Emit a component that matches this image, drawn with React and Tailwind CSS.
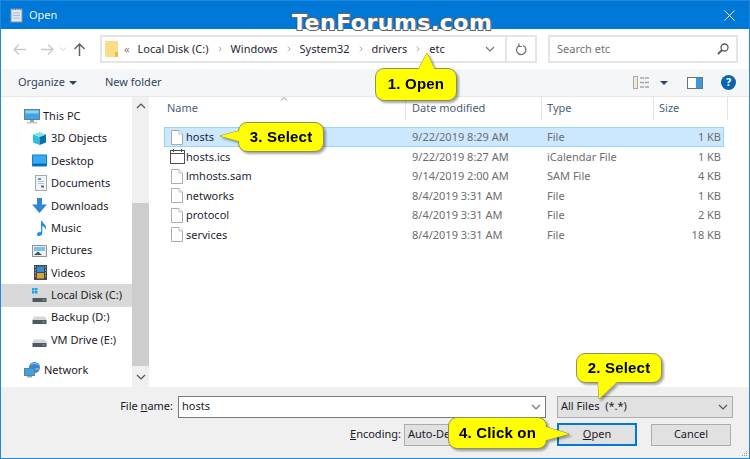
import React from "react";

const sans = "font-['Noto_Sans','Open_Sans',sans-serif]";

const PcIcon = () => (
  <svg width="16" height="15" viewBox="0 0 16 15">
    <rect x="0.500" y="0.500" width="15" height="10" fill="#3ba5e8" stroke="#6d7f8c" />
    <rect x="1.500" y="1.500" width="13" height="3" fill="#8fd0f5" />
    <rect x="6" y="11" width="4" height="2" fill="#98a2aa" />
    <rect x="3" y="13" width="10" height="1.500" fill="#c1c7cc" />
  </svg>
);

const CubeIcon = () => (
  <svg width="15" height="15" viewBox="0 0 15 15">
    <path d="M1 3.500 7.500 1 14 3.500 7.500 6z" fill="#7fe3ee" />
    <path d="M1 3.500 7.500 6v8L1 11.500z" fill="#2cc1d8" />
    <path d="M14 3.500 7.500 6v8l6.500-2.500z" fill="#0c6fa8" />
  </svg>
);

const DesktopIcon = () => (
  <svg width="15" height="13" viewBox="0 0 15 13">
    <rect x="0" y="0.500" width="15" height="12" rx="0.500" fill="#0a7fdc" />
    <rect x="1" y="1.500" width="13" height="8" fill="#3ba9f2" />
    <rect x="1" y="10" width="13" height="1.500" fill="#0b5ea8" />
  </svg>
);

const DocumentsIcon = () => (
  <svg width="12" height="16" viewBox="0 0 12 16">
    <rect x="0.500" y="0.500" width="11" height="15" fill="#f2f3f4" stroke="#a5a9ad" />
    <rect x="3" y="3" width="3" height="2" fill="#4a9ed8" />
    <path d="M3 6.500h6M3 8.500h6" stroke="#9fc6e2" />
    <rect x="6" y="10.500" width="3" height="2" fill="#5f6d78" />
  </svg>
);

const DownloadsIcon = () => (
  <svg width="15" height="15" viewBox="0 0 15 15">
    <path d="M5 0h5v6.500h5L7.500 15 0 6.500h5z" fill="#2f86d6" />
  </svg>
);

const MusicIcon = () => (
  <svg width="11" height="15" viewBox="0 0 11 15">
    <path d="M5 0h1.300c.4 2.600 3.700 3.400 3.700 6.500 0 1-.3 1.600-.7 2.100.1-2.200-1.600-3.200-3-3.700V12c0 1.700-1.500 3-3.300 3C1.800 15 1 14.200 1 13.200 1 11.600 3 10.700 5 11.200z" fill="#1e90e6" />
  </svg>
);

const PicturesIcon = () => (
  <svg width="15" height="12" viewBox="0 0 15 12">
    <rect x="0.500" y="0.500" width="14" height="11" fill="#e6e8ea" stroke="#8f979e" />
    <rect x="2" y="2" width="11" height="4" fill="#7cc0ec" />
    <path d="M2 6h11v4H2z" fill="#f5f5f5" />
    <path d="M2 10 6 6.500 10 10z" fill="#42525e" />
  </svg>
);

const VideosIcon = () => (
  <svg width="13" height="15" viewBox="0 0 13 15">
    <rect width="13" height="15" fill="#3f4a55" />
    <rect x="3" y="1.500" width="7" height="5.500" fill="#2f8fd6" />
    <rect x="3" y="8" width="7" height="5.500" fill="#d8a62e" />
    <path d="M1 2h1M1 5h1M1 8h1M1 11h1M11 2h1M11 5h1M11 8h1M11 11h1" stroke="#d5d9dc" />
  </svg>
);

const DriveIcon = ({ win }) => (
  <svg width="15" height="15" viewBox="0 0 15 15">
    {win && (
      <g fill="#19a5ee">
        <rect x="0" y="0" width="2.500" height="2.500" />
        <rect x="3" y="0" width="2.500" height="2.500" />
        <rect x="0" y="3" width="2.500" height="2.500" />
        <rect x="3" y="3" width="2.500" height="2.500" />
      </g>
    )}
    <path d="M2 6.500h11l2 3.500H0z" fill="#d4d7d9" />
    <rect x="0.500" y="10" width="14" height="4" fill="#4f5a60" />
    <rect x="10.500" y="11.500" width="2" height="1" fill="#6ee06e" />
  </svg>
);

const NetworkIcon = () => (
  <svg width="17" height="16" viewBox="0 0 17 16">
    <circle cx="10.500" cy="5.500" r="5.500" fill="#3b86c9" />
    <path d="M7 3c2-2 5-2 7 0M6 7h9" stroke="#a6d2f0" fill="none" />
    <rect x="0.500" y="6.500" width="10" height="7" fill="#37a4ea" stroke="#6a7f8e" />
    <rect x="3" y="14" width="5" height="1.500" fill="#9aa5ad" />
  </svg>
);

const FileIcon = () => (
  <svg width="12" height="15" viewBox="0 0 12 15">
    <path d="M.5.500h7.500l3.500 3.500v10.500H.5z" fill="#fff" stroke="#a9adb1" />
    <path d="M8 .500V4h3.500" fill="#f0f0f0" stroke="#c4c7ca" />
  </svg>
);

const CalendarIcon = () => (
  <svg width="15" height="15" viewBox="0 0 15 15">
    <rect x="0.500" y="1.500" width="14" height="13" fill="#fff" stroke="#4a4f55" />
    <path d="M.5 4.500h14" stroke="#4a4f55" />
    <path d="M3.500 0v3M11.500 0v3" stroke="#4a4f55" />
  </svg>
);

const Chevron = ({ className = "" }) => (
  <svg width="10" height="6" viewBox="0 0 10 6" className={className}>
    <path d="M1 1l4 4 4-4" fill="none" stroke="currentColor" strokeWidth="1.200" />
  </svg>
);

// yellow note with a pointer; tail is given in the note's own coordinates
const Callout = ({ left, top, width, height, tail, children }) => (
  <div
    className="absolute z-10 drop-shadow-[2px_2px_1px_rgba(0,0,0,0.35)]"
    style={{ left, top, width, height }}
  >
    <svg className="absolute left-0 top-0 overflow-visible" width={width} height={height}>
      <polygon points={tail} fill="#ffff00" stroke="#8a8a5a" strokeWidth="1" strokeLinejoin="round" />
    </svg>
    <div className="relative flex h-full w-full items-center justify-center rounded-[9px] border border-[#8f8f60] bg-[#ffff00] font-['Liberation_Sans',sans-serif] text-[15px] font-bold tracking-[0.2px] text-black">
      {children}
    </div>
    <svg className="absolute left-0 top-0 overflow-visible" width={width} height={height}>
      <polygon points={tail} fill="#ffff00" />
    </svg>
  </div>
);

const navItems = [
  { label: "3D Objects", icon: <CubeIcon /> },
  { label: "Desktop", icon: <DesktopIcon /> },
  { label: "Documents", icon: <DocumentsIcon /> },
  { label: "Downloads", icon: <DownloadsIcon /> },
  { label: "Music", icon: <MusicIcon /> },
  { label: "Pictures", icon: <PicturesIcon /> },
  { label: "Videos", icon: <VideosIcon /> },
  { label: "Local Disk (C:)", icon: <DriveIcon win />, active: true },
  { label: "Backup (D:)", icon: <DriveIcon /> },
  { label: "VM Drive (E:)", icon: <DriveIcon /> },
];

const files = [
  { name: "hosts", date: "9/22/2019 8:29 AM", type: "File", size: "1 KB", selected: true },
  { name: "hosts.ics", date: "9/22/2019 8:27 AM", type: "iCalendar File", size: "1 KB", cal: true },
  { name: "lmhosts.sam", date: "9/14/2019 2:00 AM", type: "SAM File", size: "4 KB" },
  { name: "networks", date: "8/4/2019 3:31 AM", type: "File", size: "1 KB" },
  { name: "protocol", date: "8/4/2019 3:31 AM", type: "File", size: "2 KB" },
  { name: "services", date: "8/4/2019 3:31 AM", type: "File", size: "18 KB" },
];

const crumbs = ["Local Disk (C:)", "Windows", "System32", "drivers", "etc"];

export default function App() {
  return (
    <div className={`relative flex h-[459px] w-[750px] flex-col overflow-hidden border border-[#1f87dc] bg-white text-[11px] text-[#1a1a2a] ${sans}`}>
      {/* title bar */}
      <div className="flex h-[28px] shrink-0 items-center bg-[#0078d7] pl-[9px] pr-[14px] text-white">
        <svg width="14" height="15" viewBox="0 0 14 15">
          <rect x="1" y="1" width="11" height="13" fill="#dfe6ee" stroke="#8098b4" />
          <path d="M3 0v2M5.500 0v2M8 0v2M10.500 0v2" stroke="#5a7ca0" />
          <path d="M3 5h7M3 7.500h7M3 10h7" stroke="#a9bdd2" />
        </svg>
        <span className="ml-[5px] text-[11px] text-[#e6f2fb]">Open</span>
        <svg className="ml-auto" width="11" height="11" viewBox="0 0 11 11">
          <path d="M.5.500l10 10M10.500.500l-10 10" stroke="#fff" />
        </svg>
      </div>

      {/* back / forward / up and the address + search boxes */}
      <div className="flex h-[40px] shrink-0 items-center">
        <div className="flex w-[99px] items-center text-[#c6c9cc]">
          <svg className="ml-[12px]" width="13" height="11" viewBox="0 0 13 11">
            <path d="M6 .500 1 5.500l5 5M1 5.500h12" fill="none" stroke="currentColor" strokeWidth="1.300" />
          </svg>
          <svg className="ml-[15px]" width="13" height="11" viewBox="0 0 13 11">
            <path d="M7 .500l5 5-5 5M12 5.500H0" fill="none" stroke="currentColor" strokeWidth="1.300" />
          </svg>
          <Chevron className="ml-[4px] scale-75" />
          <svg className="ml-[6px] text-[#5f6468]" width="11" height="13" viewBox="0 0 11 13">
            <path d="M.5 6l5-5 5 5M5.500 1v12" fill="none" stroke="currentColor" strokeWidth="1.500" />
          </svg>
        </div>
        <div className="flex h-[28px] w-[437px] items-center border-2 border-[#e3e5e7]">
          <svg className="ml-[3px] shrink-0" width="13" height="16" viewBox="0 0 13 16">
            <rect width="13" height="16" rx="1" fill="#fbdc87" />
            <rect x="10" y="11" width="3" height="5" fill="#e9bd4f" />
          </svg>
          <span className="ml-[6px] text-[#7d8186]">«</span>
          {crumbs.map((c, i) => (
            <React.Fragment key={c}>
              <span className="ml-[8px] whitespace-nowrap text-[#262633]">{c}</span>
              {i < crumbs.length - 1 && <Chevron className="ml-[8px] h-[6px] w-[6px] -rotate-90 text-[#7d8186]" />}
            </React.Fragment>
          ))}
          <Chevron className="ml-auto mr-[10px] text-[#70757a]" />
          <div className="flex h-full w-[30px] items-center justify-center border-l-2 border-[#e3e5e7] text-[#6a6e72]">
            <svg width="12" height="13" viewBox="0 0 12 13">
              <path d="M3.500 3A4.700 4.700 0 1 0 8 2.500M4 .500v3h3" fill="none" stroke="currentColor" strokeWidth="1.200" />
            </svg>
          </div>
        </div>
        <div className="ml-[11px] flex h-[28px] w-[190px] items-center justify-between border-2 border-[#e3e5e7] pl-[7px] pr-[7px] text-[#6f7377]">
          <span>Search etc</span>
          <svg width="12" height="12" viewBox="0 0 12 12">
            <circle cx="7.500" cy="4.500" r="3.500" fill="none" stroke="#555a5e" strokeWidth="1.300" />
            <path d="M5 7 1 11" stroke="#555a5e" strokeWidth="1.800" />
          </svg>
        </div>
      </div>

      {/* command bar */}
      <div className="flex h-[28px] shrink-0 items-center border-b border-[#e6e8ea] bg-[#f5f6f7] pl-[17px] text-[#33435a]">
        <span>Organize</span>
        <span className="ml-[4px] h-0 w-0 border-x-[4px] border-t-[4px] border-x-transparent border-t-[#33435a]" />
        <span className="ml-[28px]">New folder</span>
        <svg className="ml-auto" width="16" height="13" viewBox="0 0 16 13">
          <rect x="0.500" y="0.500" width="4" height="12" fill="#f4ead2" stroke="#a7a9ab" />
          <path d="M7 2h9M7 6.500h9M7 11h9" stroke="#a4a7aa" strokeWidth="1.500" strokeDasharray="4 1" />
        </svg>
        <span className="ml-[11px] h-0 w-0 border-x-[4px] border-t-[4px] border-x-transparent border-t-[#33435a]" />
        <svg className="ml-[19px]" width="16" height="12" viewBox="0 0 16 12">
          <rect x="0.500" y="0.500" width="15" height="11" fill="#fff" stroke="#6e7378" />
          <rect x="9" y="1" width="6" height="10" fill="#3a97e2" />
        </svg>
        <div className="ml-[18px] mr-[13px] flex h-[15px] w-[15px] items-center justify-center rounded-full bg-[#0b63b4] text-[11px] font-bold text-white">?</div>
      </div>

      {/* navigation tree, its scrollbar and the file list */}
      <div className="flex min-h-0 flex-1">
        <div className="w-[131px] shrink-0 pt-[8px]">
          <div className="flex h-[22.4px] items-center pl-[23px]">
            <PcIcon />
            <span className="ml-[3px]">This PC</span>
          </div>
          {navItems.map((item) => (
            <div
              key={item.label}
              className={`flex h-[22.4px] items-center ${item.active ? "bg-[#d9d9d9]" : ""}`}
            >
              <span className="flex w-[50px] shrink-0 justify-end pr-[4px]">{item.icon}</span>
              <span className="whitespace-nowrap">{item.label}</span>
            </div>
          ))}
          <div className="mt-[8px] flex h-[22.4px] items-center pl-[23px]">
            <NetworkIcon />
            <span className="ml-[3px]">Network</span>
          </div>
        </div>

        <div className="flex w-[17px] shrink-0 flex-col bg-[#f0f0f0] text-[#505050]">
          <div className="flex h-[17px] items-center justify-center">
            <Chevron className="rotate-180" />
          </div>
          <div className="mt-[89px] flex-1 bg-[#cdcdcd]" />
          <div className="flex h-[21px] items-center justify-center">
            <Chevron />
          </div>
        </div>

        <div className="min-w-0 flex-1">
          <div className="flex h-[23px] items-center text-[#4c607a]">
            <div className="relative flex h-full w-[256px] items-center pl-[18px]">
              Name
              <Chevron className="absolute left-[130px] top-[-1px] scale-75 rotate-180 text-[#7d8186]" />
            </div>
            <div className="flex h-full w-[136px] items-center border-l border-[#e5e5e5] pl-[6px]">Date modified</div>
            <div className="flex h-full w-[112px] items-center border-l border-[#e5e5e5] pl-[5px]">Type</div>
            <div className="flex h-full w-[75px] items-center border-x border-[#e5e5e5] pl-[5px]">Size</div>
          </div>
          <div className="pt-[7px] pl-[15px]">
            {files.map((f) => (
              <div
                key={f.name}
                className={`flex w-[560px] items-center border ${
                  f.selected ? "h-[20px] border-[#99d1ff] bg-[#cce8ff]" : "h-[19.5px] border-transparent"
                }`}
              >
                <span className="flex w-[21px] shrink-0 justify-center pl-[3px]">
                  {f.cal ? <CalendarIcon /> : <FileIcon />}
                </span>
                <span className="w-[226px] shrink-0 text-[#1f1f35]">{f.name}</span>
                <span className="w-[135px] shrink-0 text-[#6d6d6d]">{f.date}</span>
                <span className="w-[112px] shrink-0 text-[#6d6d6d]">{f.type}</span>
                <span className="w-[62px] shrink-0 text-right text-[#6d6d6d]">{f.size}</span>
              </div>
            ))}
          </div>
        </div>
      </div>

      {/* file name, filter and action buttons */}
      <div className="relative flex h-[71px] shrink-0 flex-col bg-[#f0f0f0] pt-[8px]">
        <div className="flex h-[23px] items-center">
          <span className="w-[177px] pr-[5px] text-right">
            File <span className="underline">n</span>ame:
          </span>
          <div className="flex h-[22px] w-[368px] items-center justify-between border border-[#7a7a7a] bg-white pl-[3px] pr-[4px]">
            hosts
            <Chevron className="text-[#70757a]" />
          </div>
          <div className="ml-[11px] flex h-[22px] w-[176px] items-center justify-between border border-[#adadad] bg-[#e1e1e1] pl-[3px] pr-[4px]">
            <span>All Files&nbsp; (*.*)</span>
            <Chevron className="text-[#555]" />
          </div>
        </div>
        <div className="mt-[5px] flex h-[23px] items-center">
          <span className="w-[403px] pr-[3px] text-right">
            <span className="underline">E</span>ncoding:
          </span>
          <div className="flex h-[22px] w-[140px] items-center border border-[#adadad] bg-[#e1e1e1] pl-[3px]">Auto-Detect</div>
          <div className="ml-[13px] flex h-[23px] w-[80px] items-center justify-center border-2 border-[#0078d7] bg-[#e1e1e1]">
            <span><span className="underline">O</span>pen</span>
          </div>
          <div className="ml-[14px] flex h-[22px] w-[80px] items-center justify-center border border-[#adadad] bg-[#e1e1e1]">Cancel</div>
        </div>
        <div className="absolute bottom-[2px] right-[2px] grid grid-cols-3 gap-[1px]">
          {[0, 1, 2, 3, 4, 5, 6, 7, 8].map((n) => (
            <span key={n} className={`h-[1px] w-[1px] ${[0, 1, 3].includes(n) ? "" : "bg-[#9a9a9a]"}`} />
          ))}
        </div>
      </div>

      {/* site watermark over the title bar */}
      <div className="absolute left-[291px] top-[9px] z-10 font-['DejaVu_Sans',sans-serif] text-[22px] font-bold leading-[26px] tracking-[0.5px] text-white [-webkit-text-stroke:2px_#666666] [paint-order:stroke_fill]">
        TenForums.com
      </div>

      <Callout left={374} top={67} width={82} height={33} tail="43,2 52,-15 60,2">1. Open</Callout>
      <Callout left={237} top={121} width={86} height={30} tail="4,8 -18,14 4,20">3. Select</Callout>
      <Callout left={575} top={352} width={86} height={30} tail="22,28 23,46 42,28">2. Select</Callout>
      <Callout left={447} top={416} width={99} height={32} tail="95,9 121,17 95,24">4. Click on</Callout>
    </div>
  );
}
